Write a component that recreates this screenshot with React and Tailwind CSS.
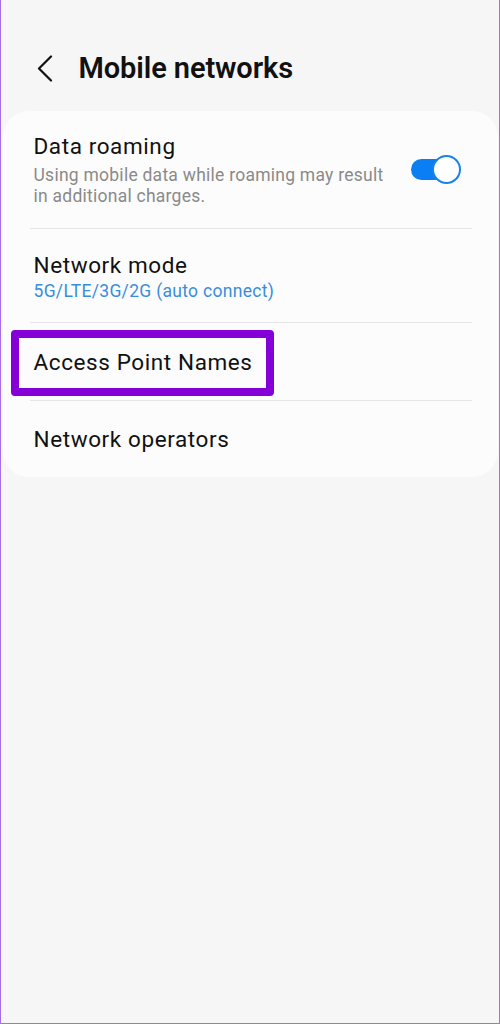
import React from "react";

const font = { fontFamily: "Roboto, 'Noto Sans', sans-serif" };

function Toggle() {
  return (
    <div className="relative w-[52px] h-[31px] flex items-center shrink-0">
      <div className="w-[46px] h-[21px] rounded-full bg-[#0a7ef2]" />
      <div className="absolute right-[2px] top-[1px] w-[29px] h-[29px] rounded-full bg-white border-2 border-[#1a82e8]" />
    </div>
  );
}

export default function App() {
  return (
    <div
      className="w-[500px] h-[1024px] bg-[#f6f6f6] border-l-[1.5px] border-r-[1.5px] border-b-[1.5px] border-[#a66ee0] px-[0.5px] overflow-hidden"
      style={font}
    >
      <div className="flex items-center pt-[50px] pl-[35px] h-[86px]">
        <svg width="16" height="27" viewBox="0 0 16 27">
          <polyline points="14,1.5 2,13.5 14,25.5" fill="none" stroke="#111" strokeWidth="2.2" strokeLinecap="round" strokeLinejoin="round" />
        </svg>
        <h1 className="ml-[26px] text-[29px] leading-[36px] font-semibold text-[#111] tracking-[-0.1px]">Mobile networks</h1>
      </div>

      <div className="mt-[25px] mx-[1px] bg-[#fcfcfc] rounded-[26px]">
        <div className="flex items-center pl-[31px] pr-[35px] h-[117px]">
          <div className="flex-1">
            <div className="text-[22.5px] leading-[28px] text-[#111] tracking-[0.6px]">Data roaming</div>
            <div className="mt-[5.5px] text-[17.5px] leading-[21px] text-[#8a8a8a] tracking-[0.25px] w-[356px]">
              Using mobile data while roaming may result in additional charges.
            </div>
          </div>
          <Toggle />
        </div>
        <div className="h-px bg-[#e6e6e6] ml-[27px] mr-[26px]" />
        <div className="pl-[31px] pt-[21.5px] pb-[20.5px]">
          <div className="text-[22.5px] leading-[28px] text-[#111] tracking-[0.6px]">Network mode</div>
          <div className="mt-[2px] text-[17.5px] leading-[21px] text-[#3a8dde] tracking-[0.3px]">5G/LTE/3G/2G (auto connect)</div>
        </div>
        <div className="h-px bg-[#e6e6e6] ml-[27px] mr-[26px]" />
        <div className="relative flex items-center pl-[31px] h-[77px]">
          <div className="text-[22.5px] leading-[28px] text-[#111] tracking-[0.6px]">Access Point Names</div>
          <div className="absolute left-[8px] top-[7px] w-[263px] h-[66px] border-[8px] border-[#8500d6] rounded-[4px]" />
        </div>
        <div className="h-px bg-[#e6e6e6] ml-[27px] mr-[26px]" />
        <div className="flex items-center pl-[31px] h-[76px]">
          <div className="text-[22.5px] leading-[28px] text-[#111] tracking-[0.6px]">Network operators</div>
        </div>
      </div>
    </div>
  );
}
